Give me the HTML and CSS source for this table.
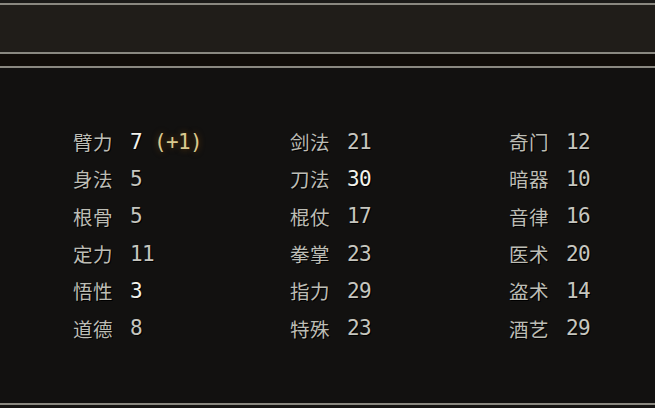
FILE: index.html
```html
<!DOCTYPE html>
<html lang="zh">
<head>
<meta charset="utf-8">
<link rel="stylesheet" href="styles.css">
</head>
<body>
<div class="screen">
  <div class="edge-top"></div>
  <div class="rule"></div>
  <div class="header"></div>
  <div class="rule"></div>
  <div class="band"></div>
  <div class="rule"></div>
  <div class="panel">
    <div class="grid">
      <div class="col">
        <div class="row"><span class="lbl">臂力</span><span class="num hi">7 <span class="bonus">(+1)</span></span></div>
        <div class="row"><span class="lbl">身法</span><span class="num">5</span></div>
        <div class="row"><span class="lbl">根骨</span><span class="num">5</span></div>
        <div class="row"><span class="lbl">定力</span><span class="num">11</span></div>
        <div class="row"><span class="lbl">悟性</span><span class="num hi">3</span></div>
        <div class="row"><span class="lbl">道德</span><span class="num">8</span></div>
      </div>
      <div class="col">
        <div class="row"><span class="lbl">剑法</span><span class="num">21</span></div>
        <div class="row"><span class="lbl">刀法</span><span class="num hi">30</span></div>
        <div class="row"><span class="lbl">棍仗</span><span class="num">17</span></div>
        <div class="row"><span class="lbl">拳掌</span><span class="num">23</span></div>
        <div class="row"><span class="lbl">指力</span><span class="num">29</span></div>
        <div class="row"><span class="lbl">特殊</span><span class="num">23</span></div>
      </div>
      <div class="col">
        <div class="row"><span class="lbl">奇门</span><span class="num">12</span></div>
        <div class="row"><span class="lbl">暗器</span><span class="num">10</span></div>
        <div class="row"><span class="lbl">音律</span><span class="num">16</span></div>
        <div class="row"><span class="lbl">医术</span><span class="num">20</span></div>
        <div class="row"><span class="lbl">盗术</span><span class="num">14</span></div>
        <div class="row"><span class="lbl">酒艺</span><span class="num">29</span></div>
      </div>
    </div>
  </div>
  <div class="rule"></div>
  <div class="edge-bottom"></div>
</div>
</body>
</html>
```

FILE: styles.css
```css
html, body {
  margin: 0;
  padding: 0;
  background: #121110;
}
.screen {
  width: 655px;
  height: 408px;
  display: flex;
  flex-direction: column;
  overflow: hidden;
  background: #121110;
}
.edge-top {
  height: 3px;
  background: #1b1a18;
}
.rule {
  height: 2px;
  background: #8a8880;
  flex: none;
}
.header {
  height: 47px;
  background: #201d19;
}
.band {
  height: 12px;
  background: #110d09;
}
.panel {
  flex: 1;
  padding: 55px 0 0 73px;
  background: #121110;
}
.edge-bottom {
  height: 3px;
  background: #151412;
}
.grid {
  display: grid;
  grid-template-columns: 217px 219px 1fr;
}
.row {
  height: 37.3px;
  display: flex;
  align-items: center;
}
.lbl {
  width: 57px;
  font-family: "Noto Sans CJK SC", sans-serif;
  font-size: 19.5px;
  letter-spacing: 0.5px;
  color: #bdbdb5;
  text-shadow: 1px 1px 0 #000;
}
.num {
  font-family: "DejaVu Sans Mono", monospace;
  font-size: 21px;
  letter-spacing: -0.64px;
  color: #c6c6bf;
  white-space: pre;
  text-shadow: 1px 1px 0 #000;
}
.num.hi {
  color: #f2f2ec;
}
.bonus {
  color: #d9c98f;
  text-shadow: 0 0 6px rgba(120, 70, 10, 0.8);
}
```
